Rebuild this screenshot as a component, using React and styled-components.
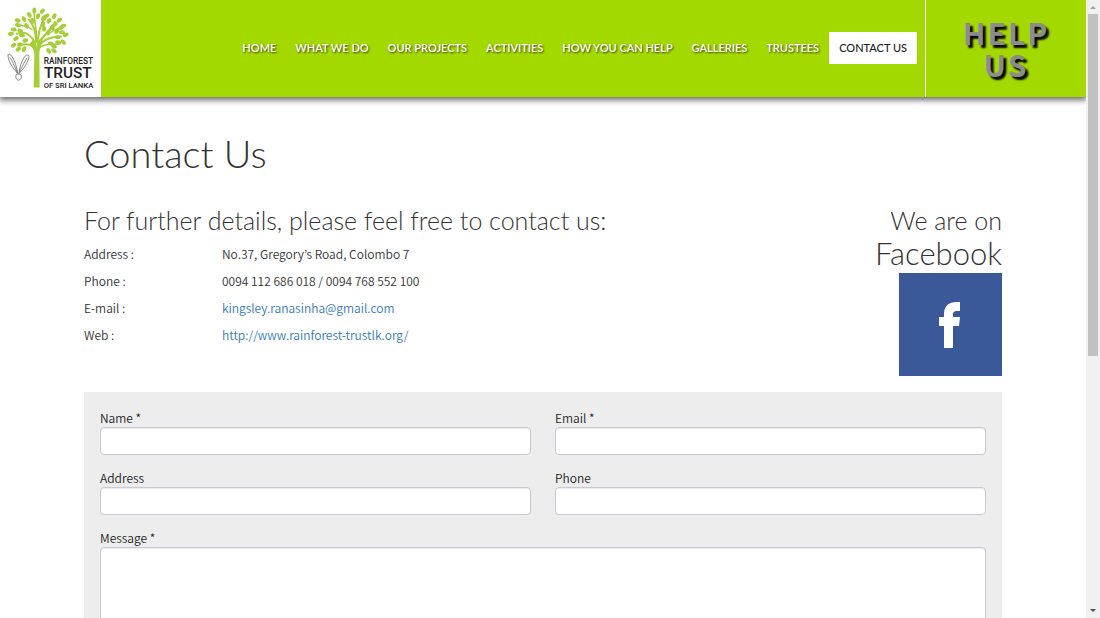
import React from "react"
import styled, {createGlobalStyle} from "styled-components"

const GlobalStyle = createGlobalStyle`
    * {
        box-sizing: border-box;
    }
    body {
        margin: 0;
        background: #fff;
        color: #333;
        font-family: "Noto Sans CJK KR", sans-serif;
        font-size: 12px;
        font-weight: 350;
        line-height: 19px;
    }
    h1, h2, p, dl, dd {
        margin: 0;
    }
`

const navLinks = [
    "Home",
    "What we do",
    "Our projects",
    "Activities",
    "How you can help",
    "Galleries",
    "Trustees",
    "Contact us"
]

// leaves of the tree: x, y, rotation
const leaves = [
    [103, 31, 90], [127, 33, -50], [88, 44, 60], [114, 48, 100], [140, 47, -30],
    [163, 48, -65], [130, 54, -60], [53, 61, 20], [72, 57, 70], [97, 62, 80],
    [147, 62, -60], [178, 60, -35], [54, 75, 15], [41, 88, 10], [129, 72, -80],
    [132, 86, 90], [165, 73, -40], [190, 77, -15], [157, 83, 60], [33, 101, -10],
    [48, 115, -30], [171, 93, -50], [186, 96, 0], [173, 111, 5], [197, 104, -20],
    [145, 97, -70], [61, 92, 20], [80, 77, 60], [76, 121, -20], [60, 133, -10],
    [41, 135, -35], [55, 147, -35], [72, 147, -60], [152, 130, 10], [162, 138, 25],
    [146, 152, 60], [162, 152, 40], [175, 127, 20], [190, 126, 50], [184, 82, -30],
    [66, 105, 10]
]

// logo of the trust: tree, seed and name
const Logo = () => (
    <LogoDrawing viewBox="0 0 303 290" role="img" aria-label="Rainforest Trust of Sri Lanka">
        <g fill="none" stroke="#a6ce39" strokeLinecap="round">
            <path d="M109 150C108 122 96 112 84 103S62 98 50 101" strokeWidth="6"/>
            <path d="M108 125C108 100 104 78 87 58" strokeWidth="6"/>
            <path d="M110 125C112 98 103 70 103 40" strokeWidth="5"/>
            <path d="M113 125C117 95 120 70 138 52" strokeWidth="6"/>
            <path d="M114 132C127 108 150 94 166 66" strokeWidth="7"/>
            <path d="M114 145C124 117 154 110 183 109" strokeWidth="6"/>
            <path d="M105 150C98 132 79 128 56 137" strokeWidth="6"/>
            <path d="M116 146C127 133 145 130 174 132" strokeWidth="5"/>
            <path d="M96 88C84 79 71 77 60 75" strokeWidth="4"/>
            <path d="M145 101C161 90 174 85 184 80" strokeWidth="4"/>
        </g>
        <path d="M99 118C106 130 108 138 109 146C112 138 114 126 121 116L130 124C121 136 118 150 118 164L119 262H101L103 164C103 148 96 139 88 132Z" fill="#a6ce39"/>
        {leaves.map(([x, y, turn]) => (
            <ellipse key={`${x}-${y}`} cx={x} cy={y} rx="9" ry="6" fill="#a6ce39" transform={`rotate(${turn} ${x} ${y})`}/>
        ))}
        <g fill="none" stroke="#4a4a4a" strokeWidth="2">
            <path d="M53 220C38 204 25 184 24 166C24 158 32 162 36 169C45 183 51 202 53 220Z"/>
            <path d="M57 220C71 205 85 187 87 169C86 161 77 164 73 171C64 185 58 202 57 220Z"/>
            <path d="M52 217C43 197 36 181 30 172M58 217C66 200 73 186 81 173"/>
            <path d="M50 222C45 228 48 239 55 240C64 239 67 229 61 222Z"/>
        </g>
        <g fill="#222" fontFamily="Roboto, sans-serif" fontWeight="500">
            <text x="131" y="191" fontSize="25">RAINFOREST</text>
            <text x="132" y="234" fontSize="46">TRUST</text>
            <text x="131" y="263" fontSize="23">OF SRI LANKA</text>
        </g>
    </LogoDrawing>
)

const Field = ({id, label, type = "text"}) => (
    <FieldGroup>
        <label htmlFor={id}>{label}</label>
        <TextInput id={id} name={id} type={type}/>
    </FieldGroup>
)

export default function App() {
    return (
        <Shell>
            <GlobalStyle/>
            <Page>
                <Header>
                    <LogoLink href="#home">
                        <Logo/>
                    </LogoLink>
                    <Nav>
                        {navLinks.map(name => (
                            <NavLink key={name} href="#" $active={name === "Contact us"}>{name}</NavLink>
                        ))}
                    </Nav>
                    <HelpLink href="#help">Help<br/>us</HelpLink>
                </Header>
                <Content>
                    <Title>Contact Us</Title>
                    <Intro>
                        <div>
                            <Heading>For further details, please feel free to contact us:</Heading>
                            <Details>
                                <dt>Address :</dt>
                                <dd>No.37, Gregory’s Road, Colombo 7</dd>
                                <dt>Phone :</dt>
                                <dd>0094 112 686 018 / 0094 768 552 100</dd>
                                <dt>E-mail :</dt>
                                <dd><a href="mailto:kingsley.ranasinha@gmail.com">kingsley.ranasinha@gmail.com</a></dd>
                                <dt>Web :</dt>
                                <dd><a href="http://www.rainforest-trustlk.org/">http://www.rainforest-trustlk.org/</a></dd>
                            </Details>
                        </div>
                        <Social>
                            <Heading>We are on <big>Facebook</big></Heading>
                            <FacebookLink href="#facebook" aria-label="Facebook">
                                <svg viewBox="0 0 103 103">
                                    <path d="M45 75V53H40V44H45V41C45 33 50 29 57 29H61V38H58C55 38 54 39 54 42V44H61L60 53H54V75Z" fill="#fff"/>
                                </svg>
                            </FacebookLink>
                        </Social>
                    </Intro>
                    <Form>
                        <Field id="name" label="Name *"/>
                        <Field id="email" label="Email *" type="email"/>
                        <Field id="address" label="Address"/>
                        <Field id="phone" label="Phone" type="tel"/>
                        <FieldGroup $wide>
                            <label htmlFor="message">Message *</label>
                            <MessageInput id="message" name="message"/>
                        </FieldGroup>
                    </Form>
                </Content>
            </Page>
            <ScrollTrack aria-hidden="true">
                <ScrollArrow viewBox="0 0 14 14"><path d="M4 9L7 6L10 9Z" fill="#a3a3a3"/></ScrollArrow>
                <ScrollSpace>
                    <ScrollThumb/>
                </ScrollSpace>
                <ScrollArrow viewBox="0 0 14 14"><path d="M4 5L7 8L10 5Z" fill="#505050"/></ScrollArrow>
            </ScrollTrack>
        </Shell>
    )
}

const Shell = styled.div`
    display: flex;
    height: 100vh;
`

const Page = styled.div`
    flex: 1;
    min-width: 0;
    overflow-y: auto;
    scrollbar-width: none;
`

const Header = styled.header`
    display: flex;
    height: 97px;
    background: #a4d900;
    box-shadow: 0 2px 6px 1px rgba(0, 0, 0, 0.6);
`

const LogoLink = styled.a`
    flex: none;
    width: 101px;
    background: #fff;
`

const LogoDrawing = styled.svg`
    display: block;
    width: 101px;
    height: 97px;
`

const Nav = styled.nav`
    flex: 1;
    display: flex;
    align-items: center;
    justify-content: flex-end;
    gap: 1px;
    padding: 0 8px 1px 0;
`

const NavLink = styled.a`
    padding: 0 ${props => props.$active ? 10 : 9}px;
    background: ${props => props.$active ? "#fff" : "transparent"};
    color: ${props => props.$active ? "#222" : "#fff"};
    font-family: Lato, sans-serif;
    font-size: 11px;
    font-weight: ${props => props.$active ? 500 : 600};
    line-height: 32px;
    text-decoration: none;
    text-shadow: ${props => props.$active ? "none" : "1px 1px 2px rgba(0, 0, 0, 0.7)"};
    text-transform: uppercase;
    white-space: nowrap;
`

const HelpLink = styled.a`
    flex: none;
    display: grid;
    place-content: center;
    width: 161px;
    padding-bottom: 2px;
    border-left: 1px solid #fff;
    color: #8c8c8c;
    font-size: 30px;
    font-weight: 700;
    line-height: 32px;
    letter-spacing: 2px;
    text-align: center;
    text-decoration: none;
    text-shadow: 3px 3px 2px #000;
    text-transform: uppercase;
`

const Content = styled.main`
    max-width: 918px;
    margin: 0 auto;
`

const Title = styled.h1`
    padding: 36px 0 46px;
    font-family: Lato, sans-serif;
    font-size: 38px;
    font-weight: 300;
    line-height: 40px;
`

const Intro = styled.section`
    display: flex;
    justify-content: space-between;
    margin-bottom: 16px;
`

const Heading = styled.h2`
    margin-top: -16px;
    font-family: Lato, sans-serif;
    font-size: 25px;
    font-weight: 300;
    line-height: 34px;
    big {
        display: block;
        font-size: 31px;
        line-height: 32px;
    }
`

const Details = styled.dl`
    display: grid;
    grid-template-columns: 138px 1fr;
    row-gap: 8px;
    padding-top: 7px;
    a {
        color: #337ab7;
        text-decoration: none;
    }
`

const Social = styled.div`
    text-align: right;
`

const FacebookLink = styled.a`
    display: block;
    width: 103px;
    height: 103px;
    margin: 4px 0 0 auto;
    background: #3b5998;
    svg {
        display: block;
    }
`

const Form = styled.form`
    display: grid;
    grid-template-columns: 1fr 1fr;
    gap: 13px 24px;
    padding: 16px;
    background: #ededed;
    color: #222;
`

const FieldGroup = styled.div`
    display: flex;
    flex-direction: column;
    grid-column: ${props => props.$wide ? "1 / -1" : "auto"};
`

const TextInput = styled.input`
    height: 28px;
    padding: 4px 10px;
    border: 1px solid #c9c9d4;
    border-radius: 4px;
    background: #fff;
    box-shadow: inset 0 1px 1px rgba(0, 0, 0, 0.08);
    font: inherit;
`

const MessageInput = styled(TextInput).attrs({as: "textarea"})`
    height: 160px;
    resize: none;
`

const ScrollTrack = styled.div`
    flex: none;
    display: flex;
    flex-direction: column;
    width: 14px;
    background: #f1f1f1;
`

const ScrollArrow = styled.svg`
    flex: none;
    width: 14px;
    height: 14px;
`

const ScrollSpace = styled.div`
    flex: 1;
    padding: 0 2px;
`

const ScrollThumb = styled.div`
    height: 58%;
    background: #c1c1c1;
`
